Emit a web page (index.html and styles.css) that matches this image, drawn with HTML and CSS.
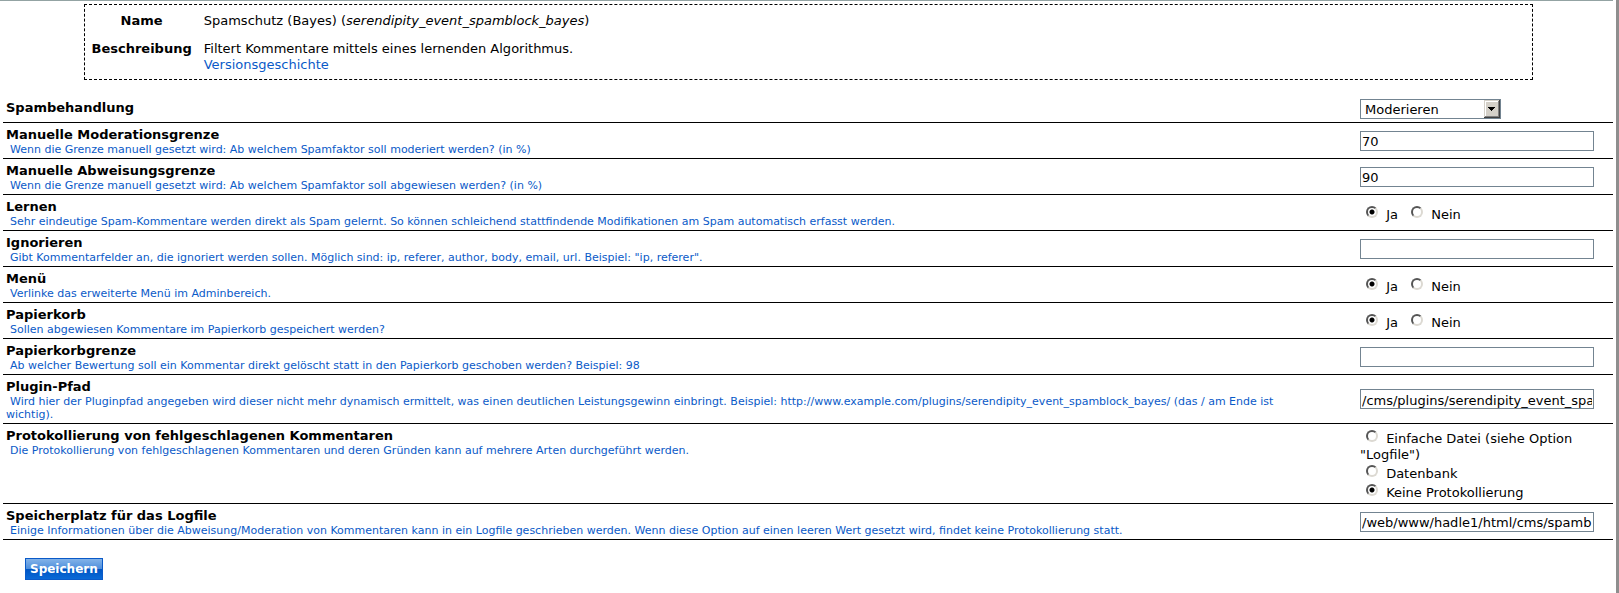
FILE: index.html
```html
<!DOCTYPE html>
<html lang="de">
<head>
<meta charset="utf-8">
<title>Spamschutz (Bayes)</title>
<link rel="stylesheet" href="styles.css">
</head>
<body>
<main class="page">
<form class="config">
  <table class="plugin-info">
    <tr><th scope="row">Name</th><td>Spamschutz (Bayes) (<em>serendipity_event_spamblock_bayes</em>)</td></tr>
    <tr><th scope="row">Beschreibung</th><td>Filtert Kommentare mittels eines lernenden Algorithmus.<br><a href="#changelog">Versionsgeschichte</a></td></tr>
  </table>

  <table class="options">
    <colgroup><col><col class="control-col"></colgroup>
    <tr>
      <td class="about"><label class="title" for="method">Spambehandlung</label></td>
      <td><div class="select-box"><select id="method"><option>Moderieren</option></select><svg class="arrow" viewBox="0 0 16 18" shape-rendering="crispEdges" aria-hidden="true"><path fill="#d4d0c8" d="M0 0h16v18H0z"/><path fill="#fff" d="M1 1h14v1H2v15H1z"/><path fill="#808080" d="M14 1h1v16H1v-1h13z"/><path fill="#404040" d="M15 0h1v18H0v-1h15z"/><path fill="#000" d="M4 7h7v1H4zM5 8h5v1H5zM6 9h3v1H6zM7 10h1v1H7z"/></svg></div></td>
    </tr>
    <tr>
      <td class="about"><label class="title" for="moderate">Manuelle Moderationsgrenze</label><p class="hint">Wenn die Grenze manuell gesetzt wird: Ab welchem Spamfaktor soll moderiert werden? (in %)</p></td>
      <td><input class="text" type="text" id="moderate" value="70"></td>
    </tr>
    <tr>
      <td class="about"><label class="title" for="block">Manuelle Abweisungsgrenze</label><p class="hint">Wenn die Grenze manuell gesetzt wird: Ab welchem Spamfaktor soll abgewiesen werden? (in %)</p></td>
      <td><input class="text" type="text" id="block" value="90"></td>
    </tr>
    <tr>
      <td class="about"><span class="title" id="t-learn">Lernen</span><p class="hint">Sehr eindeutige Spam-Kommentare werden direkt als Spam gelernt. So können schleichend stattfindende Modifikationen am Spam automatisch erfasst werden.</p></td>
      <td class="radios"><div class="choices" role="radiogroup" aria-labelledby="t-learn"><label><input type="radio" name="learn" checked> Ja</label> <label><input type="radio" name="learn"> Nein</label></div></td>
    </tr>
    <tr>
      <td class="about"><label class="title" for="ignore">Ignorieren</label><p class="hint">Gibt Kommentarfelder an, die ignoriert werden sollen. Möglich sind: ip, referer, author, body, email, url. Beispiel: "ip, referer".</p></td>
      <td><input class="text" type="text" id="ignore"></td>
    </tr>
    <tr>
      <td class="about"><span class="title" id="t-menu">Menü</span><p class="hint">Verlinke das erweiterte Menü im Adminbereich.</p></td>
      <td class="radios"><div class="choices" role="radiogroup" aria-labelledby="t-menu"><label><input type="radio" name="menu" checked> Ja</label> <label><input type="radio" name="menu"> Nein</label></div></td>
    </tr>
    <tr>
      <td class="about"><span class="title" id="t-recycler">Papierkorb</span><p class="hint">Sollen abgewiesen Kommentare im Papierkorb gespeichert werden?</p></td>
      <td class="radios"><div class="choices" role="radiogroup" aria-labelledby="t-recycler"><label><input type="radio" name="recycler" checked> Ja</label> <label><input type="radio" name="recycler"> Nein</label></div></td>
    </tr>
    <tr>
      <td class="about"><label class="title" for="limit">Papierkorbgrenze</label><p class="hint">Ab welcher Bewertung soll ein Kommentar direkt gelöscht statt in den Papierkorb geschoben werden? Beispiel: 98</p></td>
      <td><input class="text" type="text" id="limit"></td>
    </tr>
    <tr>
      <td class="about"><label class="title" for="path">Plugin-Pfad</label><p class="hint">Wird hier der Pluginpfad angegeben wird dieser nicht mehr dynamisch ermittelt, was einen deutlichen Leistungsgewinn einbringt. Beispiel: http://www.example.com/plugins/serendipity_event_spamblock_bayes/ (das / am Ende ist wichtig).</p></td>
      <td><input class="text" type="text" id="path" value="/cms/plugins/serendipity_event_spamblock_bayes/"></td>
    </tr>
    <tr>
      <td class="about"><span class="title" id="t-log">Protokollierung von fehlgeschlagenen Kommentaren</span><p class="hint">Die Protokollierung von fehlgeschlagenen Kommentaren und deren Gründen kann auf mehrere Arten durchgeführt werden.</p></td>
      <td class="radios"><div role="radiogroup" aria-labelledby="t-log"><div class="choices"><label><input type="radio" name="log"> Einfache Datei (siehe Option "Logfile")</label></div><div class="choices"><label><input type="radio" name="log"> Datenbank</label></div><div class="choices"><label><input type="radio" name="log" checked> Keine Protokollierung</label></div></div></td>
    </tr>
    <tr>
      <td class="about"><label class="title" for="logfile">Speicherplatz für das Logfile</label><p class="hint">Einige Informationen über die Abweisung/Moderation von Kommentaren kann in ein Logfile geschrieben werden. Wenn diese Option auf einen leeren Wert gesetzt wird, findet keine Protokollierung statt.</p></td>
      <td><input class="text" type="text" id="logfile" value="/web/www/hadle1/html/cms/spamblock.log"></td>
    </tr>
  </table>
  <button class="save" type="button">Speichern</button>
</form>
</main>
</body>
</html>
```
FILE: styles.css
```css
* { box-sizing: border-box; }

body {
  margin: 0;
  background: #fff;
  color: #000;
  font: 13px/16px Verdana, "DejaVu Sans", sans-serif;
}

.page {
  min-height: 100vh;
  padding-right: 3px;
  border-right: 3px solid #8e8e8e;
}

.config {
  padding: 3px 0 12px 3px;
  border-top: 1px solid #93a3a3;
}

table { border-spacing: 0; }

.plugin-info {
  width: 90%;
  margin: 0 auto 16px;
  padding: 2px 1px 0;
  border: 1px dashed #000;
}

.plugin-info th,
.plugin-info td {
  padding: 6px;
  vertical-align: top;
}

.plugin-info th { width: 112px; }

a { color: #0a5ac8; text-decoration: none; }

.options {
  width: 100%;
  table-layout: fixed;
}

.control-col { width: 256px; }

.options td {
  padding: 3px;
  border-bottom: 1px solid #000;
  vertical-align: middle;
}

.options .about,
.options .radios {
  padding: 4px 3px 2px;
}

.options .about { vertical-align: top; }

.title {
  display: block;
  font-weight: bold;
}

.hint {
  margin: 0;
  padding-right: 32px;
  color: #0a5ac8;
  font-size: 11px;
  line-height: 13px;
  text-indent: 4px;
}

.text,
select {
  display: block;
  height: 20px;
  margin: 0;
  border: 1px solid #738491;
  border-radius: 0;
  background: #fff;
  color: #000;
  font: inherit;
}

.text {
  width: 234px;
  padding: 2px 1px 0;
}

.select-box {
  position: relative;
  width: 141px;
}

select {
  width: 100%;
  padding: 1px 18px 0 4px;
  appearance: none;
}

.arrow {
  position: absolute;
  top: 1px;
  right: 1px;
  width: 16px;
  height: 18px;
  pointer-events: none;
}

.choices { padding-top: 3px; }

.choices label + label { margin-left: 3px; }

input[type="radio"] {
  appearance: none;
  width: 12px;
  height: 12px;
  margin: -4px 4px 0 6px;
  border: 2px solid;
  border-color: #555 #dcd9d2 #dcd9d2 #555;
  border-radius: 50%;
  background: #fff;
  vertical-align: 1px;
}

input[type="radio"]:checked {
  background: radial-gradient(circle, #000 2px, #fff 3px);
}

.save {
  display: block;
  height: 22px;
  margin: 18px 0 0 22px;
  padding: 0 4px;
  border: 1px solid #0a5ac8;
  background: linear-gradient(#82b2e8, #4f8fdc 48%, #0055c4 52%, #0a69d6);
  color: #fff;
  font: bold 12px/16px Verdana, "DejaVu Sans", sans-serif;
}
```
